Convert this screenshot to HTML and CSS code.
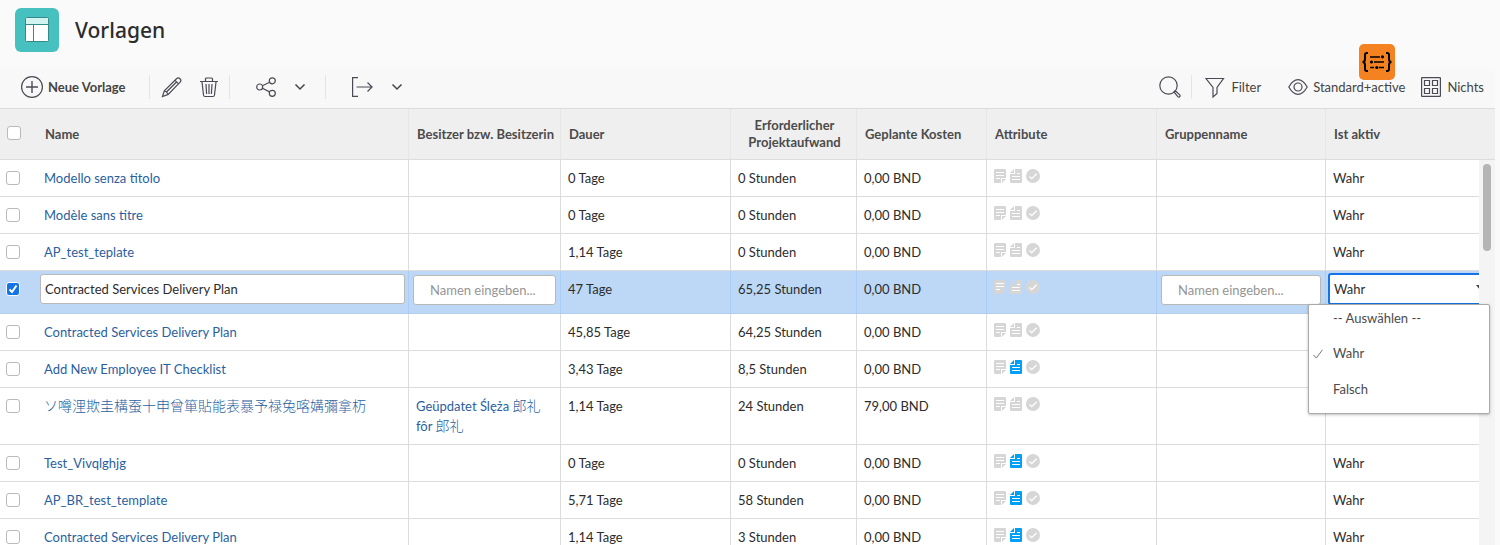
FILE: index.html
```html
<!DOCTYPE html>
<html lang="de">
<head>
<meta charset="utf-8">
<title>Vorlagen</title>
<link rel="stylesheet" href="styles.css">
</head>
<body>
<svg class="sprite" aria-hidden="true">
  <symbol id="note" viewBox="0 0 12 14"><path fill="currentColor" d="M1 0h10q1 0 1 1v8H7v5H1q-1 0-1-1V1q0-1 1-1z"/><path fill="currentColor" d="M8 10h4l-4 4z"/><path stroke="#fff" d="M2 3.500h8M2 6.500h8M2 9.500h4"/></symbol>
  <symbol id="doc" viewBox="0 0 12 14"><path fill="currentColor" d="M5 0h6q1 0 1 1v12q0 1-1 1H1q-1 0-1-1V5h5z"/><path fill="currentColor" d="M4 0v4H0z"/><path stroke="#fff" d="M7 4.500h3M2 7.500h8M2 10.500h8"/></symbol>
  <symbol id="ok" viewBox="0 0 14 14"><circle cx="7" cy="7" r="7" fill="currentColor"/><path d="M3.500 7.500l2.200 2.200L10.700 4.700" fill="none" stroke="#fff" stroke-width="1.300"/></symbol>
  <symbol id="chevron" viewBox="0 0 12 8"><path d="M1.500 1.500L6 6l4.500-4.500" fill="none" stroke="currentColor" stroke-width="1.500"/></symbol>
</svg>

<header class="page-head">
  <span class="logo">
    <svg width="24" height="26" viewBox="0 0 24 26" aria-hidden="true"><rect x=".5" y=".5" width="23" height="24" rx="1" fill="#fff" stroke="#338a89"/><path d="M1 1h22v6H1z" fill="#d3f3f1"/><path d="M1 7.500h22M8.500 8v16" stroke="#338a89"/></svg>
  </span>
  <h1>Vorlagen</h1>
</header>

<nav class="toolbar">
  <button class="tool new"><svg width="22" height="22" viewBox="0 0 22 22"><circle cx="11" cy="11" r="10.400"/><path d="M11 5v12M5 11h12" stroke-width="1.400"/></svg>Neue Vorlage</button>
  <span class="rule"></span>
  <button class="tool edit" aria-label="Bearbeiten"><svg width="22" height="22" viewBox="0 0 22 22"><path d="M1.500 20.500l1.800-5.800L15.500 2.800q1.800-1.700 3.500-.1t.1 3.500L7.200 18.400zM3.300 14.700q2.700.9 3.900 3.700M14 4.300l3.600 3.600M5.500 16L15.500 6"/></svg></button>
  <button class="tool trash" aria-label="Löschen"><svg width="20" height="22" viewBox="0 0 20 22"><path d="M1 5.500h18M6.500 5V3q0-1 1-1h5q1 0 1 1v2M3 6l1.500 13q.2 1.500 1.500 1.500h8q1.300 0 1.500-1.500L17 6M7 8l.6 10M10 8v10M13 8l-.6 10"/></svg></button>
  <span class="rule"></span>
  <button class="tool share" aria-label="Freigeben"><svg width="20" height="20" viewBox="0 0 20 20"><circle cx="3.700" cy="10" r="3"/><circle cx="16.300" cy="3.800" r="3"/><circle cx="16.300" cy="16.300" r="3"/><path d="M6.400 8.700l7.200-3.500M6.400 11.300l7.200 3.600"/></svg><svg class="chev" width="12" height="8"><use href="#chevron"/></svg></button>
  <span class="rule"></span>
  <button class="tool export" aria-label="Exportieren"><svg width="22" height="20" viewBox="0 0 22 20"><path d="M7 .6H1.600v18.800H7M5.500 10H21M16.500 5.500L21 10l-4.500 4.500"/></svg><svg class="chev" width="12" height="8"><use href="#chevron"/></svg></button>
  <span class="spacer"></span>
  <button class="tool search" aria-label="Suchen"><svg width="22" height="22" viewBox="0 0 22 22"><circle cx="9.500" cy="9.500" r="8.700"/><path d="M15 16l1.300-1.300 4.400 4.200q.9 1-.1 1.900-.9.800-1.800-.1z"/></svg></button>
  <span class="rule"></span>
  <button class="tool filter"><svg width="20" height="22" viewBox="0 0 20 22"><path d="M1 2.500h17.500l-6.500 9v6L8 21v-9.500z"/></svg>Filter</button>
  <button class="tool view"><svg width="20" height="18" viewBox="0 0 20 18"><path d="M.8 9Q5 1.700 10 1.700T19.200 9Q15 16.300 10 16.300T.8 9z"/><circle cx="10" cy="9" r="4"/></svg>Standard+active
    <svg class="badge" width="36" height="36" viewBox="0 0 36 36"><rect width="36" height="36" rx="5" fill="#f58220"/><g fill="none" stroke="#000"><path stroke-width="2" d="M9 9H7.800Q6 9 6 11v4q0 3-2.500 3Q6 18 6 21v4q0 2 1.800 2H9M27 9h1.200Q30 9 30 11v4q0 3 2.500 3Q30 18 30 21v4q0 2-1.800 2H27"/><path stroke-width="1.600" d="M11 13h10M15 18h10M11 23.500h4M20 23.500h5"/></g><circle cx="23.500" cy="12.800" r="1.600"/><circle cx="12.500" cy="18" r="1.600"/><circle cx="17.800" cy="23.500" r="1.600"/></svg></button>
  <button class="tool group"><svg width="20" height="20" viewBox="0 0 20 20"><rect x=".6" y=".6" width="18.800" height="18.800" rx=".5"/><path d="M3.500 3.500h5v5h-5zM11.500 3.500h5v5h-5zM3.500 11.500h5v5h-5zM11.500 11.500h5v5h-5z"/></svg>Nichts</button>
</nav>

<main class="list">
  <div class="table-area">
    <table>
      <colgroup><col class="c-check"><col><col class="c-owner"><col class="c-wide"><col class="c-effort"><col class="c-cost"><col class="c-wide"><col class="c-group"><col class="c-active"></colgroup>
      <thead>
        <tr><th class="check"><input type="checkbox" aria-label="Alle auswählen"></th><th class="name">Name</th><th>Besitzer bzw. Besitzerin</th><th>Dauer</th><th class="center">Erforderlicher Projektaufwand</th><th>Geplante Kosten</th><th>Attribute</th><th>Gruppenname</th><th>Ist aktiv</th></tr>
      </thead>
      <tbody>
        <tr><td class="check"><input type="checkbox" aria-label="Modello senza titolo"></td><td class="name"><a href="#">Modello senza titolo</a></td><td></td><td>0 Tage</td><td>0 Stunden</td><td>0,00 BND</td><td class="attrs"><svg class="n"><use href="#note"/></svg><svg class="n"><use href="#doc"/></svg><svg class="o"><use href="#ok"/></svg></td><td></td><td>Wahr</td></tr>
        <tr><td class="check"><input type="checkbox" aria-label="Modèle sans titre"></td><td class="name"><a href="#">Modèle sans titre</a></td><td></td><td>0 Tage</td><td>0 Stunden</td><td>0,00 BND</td><td class="attrs"><svg class="n"><use href="#note"/></svg><svg class="n"><use href="#doc"/></svg><svg class="o"><use href="#ok"/></svg></td><td></td><td>Wahr</td></tr>
        <tr><td class="check"><input type="checkbox" aria-label="AP_test_teplate"></td><td class="name"><a href="#">AP_test_teplate</a></td><td></td><td>1,14 Tage</td><td>0 Stunden</td><td>0,00 BND</td><td class="attrs"><svg class="n"><use href="#note"/></svg><svg class="n"><use href="#doc"/></svg><svg class="o"><use href="#ok"/></svg></td><td></td><td>Wahr</td></tr>
        <tr class="selected"><td class="check"><input type="checkbox" checked aria-label="Contracted Services Delivery Plan"></td><td class="field"><input class="text" type="text" aria-label="Name" value="Contracted Services Delivery Plan"></td><td class="field lookup"><input class="text" type="text" aria-label="Besitzer bzw. Besitzerin" placeholder="Namen eingeben..."></td><td>47 Tage</td><td>65,25 Stunden</td><td>0,00 BND</td><td class="attrs"><svg class="n"><use href="#note"/></svg><svg class="n"><use href="#doc"/></svg><svg class="o"><use href="#ok"/></svg></td><td class="field lookup"><input class="text" type="text" aria-label="Gruppenname" placeholder="Namen eingeben..."></td><td class="field pick"><select aria-label="Ist aktiv"><option>-- Auswählen --</option><option selected>Wahr</option><option>Falsch</option></select></td></tr>
        <tr><td class="check"><input type="checkbox" aria-label="Contracted Services Delivery Plan"></td><td class="name"><a href="#">Contracted Services Delivery Plan</a></td><td></td><td>45,85 Tage</td><td>64,25 Stunden</td><td>0,00 BND</td><td class="attrs"><svg class="n"><use href="#note"/></svg><svg class="n"><use href="#doc"/></svg><svg class="o"><use href="#ok"/></svg></td><td></td><td></td></tr>
        <tr><td class="check"><input type="checkbox" aria-label="Add New Employee IT Checklist"></td><td class="name"><a href="#">Add New Employee IT Checklist</a></td><td></td><td>3,43 Tage</td><td>8,5 Stunden</td><td>0,00 BND</td><td class="attrs"><svg class="n"><use href="#note"/></svg><svg class="n on"><use href="#doc"/></svg><svg class="o"><use href="#ok"/></svg></td><td></td><td></td></tr>
        <tr><td class="check"><input type="checkbox" aria-label="ソ噂浬欺圭構蚕十申曾箪貼能表暴予禄兔喀媾彌拿杤"></td><td class="name"><a class="cjk" href="#">ソ噂浬欺圭構蚕十申曾箪貼能表暴予禄兔喀媾彌拿杤</a></td><td><a href="#">Geüpdatet Ślęża <span class="cjk">郎礼</span><br>fôr <span class="cjk">郎礼</span></a></td><td>1,14 Tage</td><td>24 Stunden</td><td>79,00 BND</td><td class="attrs"><svg class="n"><use href="#note"/></svg><svg class="n"><use href="#doc"/></svg><svg class="o"><use href="#ok"/></svg></td><td></td><td></td></tr>
        <tr><td class="check"><input type="checkbox" aria-label="Test_Vivqlghjg"></td><td class="name"><a href="#">Test_Vivqlghjg</a></td><td></td><td>0 Tage</td><td>0 Stunden</td><td>0,00 BND</td><td class="attrs"><svg class="n"><use href="#note"/></svg><svg class="n on"><use href="#doc"/></svg><svg class="o"><use href="#ok"/></svg></td><td></td><td>Wahr</td></tr>
        <tr><td class="check"><input type="checkbox" aria-label="AP_BR_test_template"></td><td class="name"><a href="#">AP_BR_test_template</a></td><td></td><td>5,71 Tage</td><td>58 Stunden</td><td>0,00 BND</td><td class="attrs"><svg class="n"><use href="#note"/></svg><svg class="n on"><use href="#doc"/></svg><svg class="o"><use href="#ok"/></svg></td><td></td><td>Wahr</td></tr>
        <tr><td class="check"><input type="checkbox" aria-label="Contracted Services Delivery Plan"></td><td class="name"><a href="#">Contracted Services Delivery Plan</a></td><td></td><td>1,14 Tage</td><td>3 Stunden</td><td>0,00 BND</td><td class="attrs"><svg class="n"><use href="#note"/></svg><svg class="n on"><use href="#doc"/></svg><svg class="o"><use href="#ok"/></svg></td><td></td><td>Wahr</td></tr>
      </tbody>
    </table>
  </div>
  <div class="scroll"><div class="scroll-cap"></div><div class="scroll-thumb"></div></div>
  <ul class="menu" role="listbox" aria-label="Ist aktiv">
    <li role="option">-- Auswählen --</li>
    <li role="option" aria-selected="true"><svg width="10" height="10" viewBox="0 0 10 10" aria-hidden="true"><path d="M.5 6l2.800 3L9.500.8" fill="none" stroke="#777"/></svg>Wahr</li>
    <li role="option">Falsch</li>
  </ul>
</main>
</body>
</html>
```
FILE: styles.css
```css
* { box-sizing: border-box; }

html { height: 100%; overflow: hidden; }

body {
  margin: 0;
  height: 100%;
  display: flex;
  flex-direction: column;
  overflow: hidden;
  background: #fafafa;
  color: #2c2c2c;
  font: 13px/20px Lato, "Noto Sans CJK JP", sans-serif;
}

.sprite { position: absolute; width: 0; height: 0; }

button, input, select { font: inherit; color: inherit; }

.page-head {
  flex: none;
  display: flex;
  align-items: center;
  gap: 16px;
  height: 68px;
  padding: 0 16px 8px 15px;
}

.logo {
  display: grid;
  place-items: center;
  width: 44px;
  height: 44px;
  border-radius: 6px;
  background: #47c1bf;
}

h1 { margin: 0; font: 500 21px/32px "Noto Sans", sans-serif; }

.toolbar {
  flex: none;
  display: flex;
  align-items: center;
  height: 41px;
  margin-right: 5px;
  padding: 0 11px 2px 21px;
  background: #f8f8f8;
  border-bottom: 1px solid #dcdcdc;
}

.tool {
  display: flex;
  align-items: center;
  padding: 0;
  border: 0;
  background: none;
  color: #444;
  white-space: nowrap;
}

.tool svg { flex: none; fill: none; stroke: #4b4b55; stroke-width: 1.2; }
.tool .chev { margin-left: 18px; stroke: none; color: #444; }
.rule { width: 1px; height: 24px; background: #e4e4e4; }
.spacer { flex: 1; }

.new { gap: 5px; margin-right: 23px; font-weight: 700; }
.edit { margin: 0 16px 0 11px; }
.trash { margin-right: 10px; }
.share { margin: 0 19px 0 26px; }
.export { margin-left: 25px; }
.search { margin-right: 10px; }
.filter { gap: 6px; margin: 0 27px 0 13px; }
.view { position: relative; gap: 5px; margin-right: 16px; }
.group { gap: 6px; }

.tool .badge { position: absolute; right: 10px; bottom: 17px; fill: #000; stroke: none; }

.list {
  position: relative;
  flex: 1;
  min-height: 0;
  display: flex;
  margin-right: 5px;
}

.table-area { flex: 1; min-width: 0; overflow: hidden; background: #fff; }

table { width: 100%; table-layout: fixed; border-collapse: separate; border-spacing: 0; }

.c-check { width: 36px; }
.c-owner { width: 152px; }
.c-wide { width: 170px; }
.c-effort { width: 126px; }
.c-cost { width: 130px; }
.c-group { width: 169px; }
.c-active { width: 153px; }

th, td {
  padding: 8px 7px;
  border-right: 1px solid #dcdcdc;
  border-bottom: 1px solid #dcdcdc;
  text-align: left;
}

td { height: 37px; vertical-align: top; white-space: nowrap; }

th {
  height: 51px;
  padding: 0 6px 0 8px;
  background: #efefef;
  border-right-color: #e6e6e6;
  color: #4b4b4b;
  line-height: 17px;
  font-weight: 700;
}

th:last-child, td:last-child, .check { border-right: 0; }

.center { text-align: center; }
.check { padding: 11px 0 0 6px; line-height: 0; }
th.check { padding: 0 0 2px 7px; }
td.name { padding-left: 8px; }
th.name { padding-left: 9px; }

a { color: #2a5f9f; text-decoration: none; }
.cjk { font-family: "Noto Sans CJK JP", sans-serif; font-size: 14px; font-weight: 300; line-height: 1; }

input[type="checkbox"] {
  appearance: none;
  width: 14px;
  height: 14px;
  margin: 0;
  border: 1px solid #b9b9b9;
  border-radius: 3px;
  background: #fff;
}

input[type="checkbox"]:checked {
  border-color: #fff;
  background: #1473e6 url("data:image/svg+xml,%3Csvg xmlns='http://www.w3.org/2000/svg' viewBox='0 0 12 12'%3E%3Cpath d='M2.500 6.500l2.500 2.500L9.500 2.500' fill='none' stroke='white' stroke-width='2'/%3E%3C/svg%3E");
}

.attrs { padding-top: 9px; line-height: 0; color: #d6d6d6; }
.attrs svg { height: 14px; margin-right: 4px; }
.attrs .n { width: 12px; }
.attrs .o { width: 14px; }
.attrs .on { color: #00a0f5; }

.selected td { height: 43px; background: #bdd8f7; border-right-color: #a9cdf7; border-bottom-color: #b3cdea; }
td.field { padding: 3px 3px 0 4px; }
.selected .lookup { padding: 4px 4px 0; }

.text {
  display: block;
  width: 100%;
  height: 30px;
  padding: 0 4px;
  border: 1px solid #b9b9b9;
  border-radius: 3px;
  background: #fff;
}

.lookup .text { padding: 0 8px 0 16px; }
.text::placeholder { color: #959595; opacity: 1; }

.selected .pick { padding: 2px 0 0 2px; overflow: hidden; }

select {
  display: block;
  appearance: none;
  width: 160px;
  height: 32px;
  padding: 0 4px;
  border: 2px solid #1473e6;
  border-radius: 3px;
  background: #fff url("data:image/svg+xml,%3Csvg xmlns='http://www.w3.org/2000/svg' viewBox='0 0 8 5'%3E%3Cpath d='M0 0h8L4 5z' fill='%23444'/%3E%3C/svg%3E") no-repeat right 2px top 10px / 8px 5px;
}

.scroll { flex: none; width: 16px; background: #f4f4f4; }
.scroll-cap { height: 51px; background: #efefef; border-bottom: 1px solid #dcdcdc; }
.scroll-thumb { width: 8px; height: 87px; margin: 4px; border-radius: 4px; background: #b5b5b5; }

.menu {
  position: absolute;
  top: 195px;
  right: 5px;
  width: 182px;
  margin: 0;
  padding: 0 0 5px;
  list-style: none;
  background: #fff;
  border: 1px solid #aaa;
  border-radius: 2px;
  box-shadow: 0 1px 3px rgba(0, 0, 0, .25);
  color: #4b4b4b;
}

.menu li { position: relative; height: 36px; padding: 7px 24px; }
.menu li:first-child { height: 31px; padding-top: 3px; }
.menu svg { position: absolute; left: 4px; top: 13px; }
```
